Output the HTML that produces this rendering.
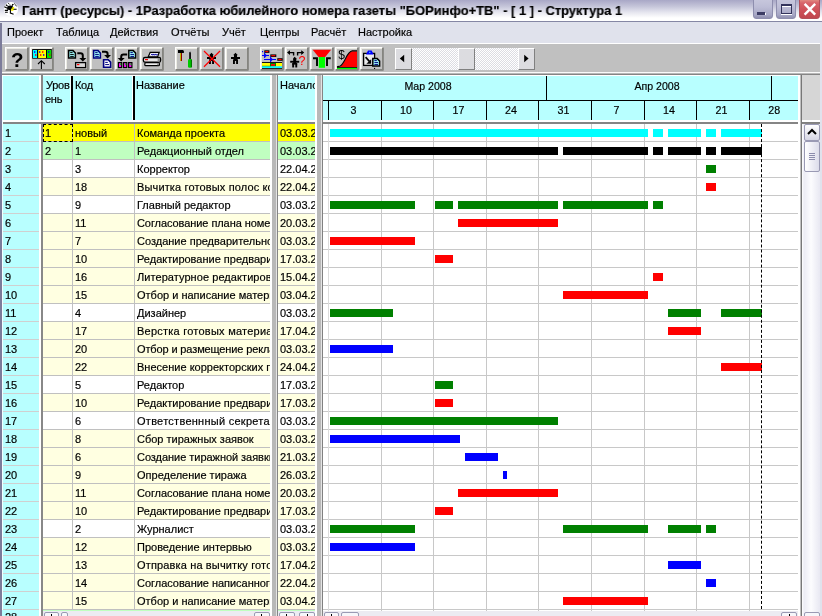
<!DOCTYPE html>
<html><head><meta charset="utf-8"><title>Gantt</title>
<style>
html,body{margin:0;padding:0;}
body{width:822px;height:616px;overflow:hidden;position:relative;background:#e0e2ec;font-family:"Liberation Sans",sans-serif;}
div,span{position:absolute;box-sizing:border-box;}
.t,.cell{will-change:transform;-webkit-text-stroke:0.18px #000;}
.t{white-space:nowrap;color:#000;font-size:11px;line-height:12px;}
.cell{overflow:hidden;white-space:nowrap;font-size:11px;line-height:17px;height:17px;padding-top:1.2px;color:#000;}
.btn{width:23px;height:23px;top:47px;background:#c0c0c0;border:1px solid;border-color:#fff #858580 #858580 #fff;box-shadow:0.6px 0.6px 0 #6c6c68, inset 1px 1px 0 #ecece4;}
.sb{background:#d4d0c8;border:1px solid;border-color:#fff #808080 #808080 #fff;}
</style></head><body>

<div style="left:0;top:0;width:822px;height:22px;background:linear-gradient(#a8a7c6 0px,#c3c3d8 6px,#e4e4ee 12px,#ffffff 18px,#ffffff 22px);"></div>
<div style="left:0;top:20.8px;width:822px;height:1.7px;background:linear-gradient(#b4b4cc,#7c7e9c 60%,#8c8eaa);"></div>
<div class="t" id="title" style="left:22px;top:1.5px;font-size:13.5px;font-weight:bold;line-height:18px;transform:scaleX(0.9575);transform-origin:0 0;">Гантт (ресурсы) - 1Разработка юбилейного номера газеты "БОРинфо+ТВ" - [ 1 ] - Структура 1</div>
<svg style="position:absolute;left:0;top:0" width="24" height="20" viewBox="0 0 24 20"><ellipse cx="11" cy="9" rx="7.2" ry="6.9" fill="#fff"/><ellipse cx="10.2" cy="7.8" rx="3" ry="2.3" fill="#000"/><path d="M7.5 6l-1.6-1.2M12 5.6l1.2-1.4" stroke="#000" stroke-width="1.2"/><path d="M8.3 3.4l2 1.4M12.5 5.2l1-1.8M14.5 3.5l2.2 3" stroke="#000" stroke-width="1" stroke-dasharray="1.4 0.7" fill="none"/><path d="M4.3 6.8l3.6 1.6M4.8 10.4h3.2M5 12.3h2.8M12.8 9.2h3.8M10.4 9.5v3.6l3.2 1.1M8 9.5l-1.5 1.2" stroke="#000" stroke-width="1.1" fill="none"/><rect x="11" y="8.6" width="2.4" height="2.2" fill="#f4f000"/><rect x="12.3" y="7" width="1.8" height="2" fill="#f4f000"/></svg>
<div style="left:753px;top:-3px;width:20px;height:22px;border-radius:3px;background:linear-gradient(#c9c9de 0%,#bdbdd6 45%,#a6a6c4 85%,#9090b0 100%);border:1px solid #8e8eae;"></div>
<div style="left:758px;top:12.6px;width:7.5px;height:2.8px;background:#fff;"></div><div style="left:757.4px;top:12.2px;width:7.5px;height:2.6px;background:#3c3c64;"></div>
<div style="left:776px;top:-3px;width:20px;height:22px;border-radius:3px;background:linear-gradient(#c9c9de 0%,#bdbdd6 45%,#a6a6c4 85%,#9090b0 100%);border:1px solid #8e8eae;"></div>
<div style="left:781.4px;top:4.6px;width:11px;height:10.4px;border:1px solid #fff;border-top-width:2.4px;"></div><div style="left:780.6px;top:4px;width:11px;height:10.4px;border:1px solid #34345c;border-top-width:2.4px;"></div>
<div style="left:799px;top:-3px;width:20.5px;height:22px;border-radius:3px;background:linear-gradient(#e6a08e 0%,#d8646a 25%,#cf5058 60%,#c0464e 100%);border:1px solid #b4505a;"></div>
<svg style="position:absolute;left:802px;top:1px" width="16" height="16" viewBox="0 0 16 16"><path d="M2.6 2.8l10.6 10.8M13.2 2.8l-10.6 10.8" stroke="#fff" stroke-width="2.4"/></svg>
<div class="t" style="left:6.6px;top:26px;font-size:11px;line-height:13px;">Проект</div>
<div class="t" style="left:55.6px;top:26px;font-size:11px;line-height:13px;">Таблица</div>
<div class="t" style="left:109.6px;top:26px;font-size:11px;line-height:13px;">Действия</div>
<div class="t" style="left:170.6px;top:26px;font-size:11px;line-height:13px;">Отчёты</div>
<div class="t" style="left:222.1px;top:26px;font-size:11px;line-height:13px;">Учёт</div>
<div class="t" style="left:259.6px;top:26px;font-size:11px;line-height:13px;">Центры</div>
<div class="t" style="left:311.1px;top:26px;font-size:11px;line-height:13px;">Расчёт</div>
<div class="t" style="left:357.6px;top:26px;font-size:11px;line-height:13px;">Настройка</div>
<div style="left:0;top:42.5px;width:820px;height:1px;background:#fff;"></div>
<div style="left:0;top:43.5px;width:820px;height:28.5px;background:#c0c0c0;"></div>
<div style="left:0;top:72px;width:820px;height:1.3px;background:#fafafa;"></div>
<div style="left:0;top:73.2px;width:820px;height:1.2px;background:#b8b8b8;"></div><div style="left:0;top:74.3px;width:820px;height:1.2px;background:#858585;"></div>
<div class="btn" id="b0" style="left:5px;"></div>
<div class="btn" id="b1" style="left:30px;"></div>
<div class="btn" id="b2" style="left:65px;"></div>
<div class="btn" id="b3" style="left:90px;"></div>
<div class="btn" id="b4" style="left:115px;"></div>
<div class="btn" id="b5" style="left:140px;"></div>
<div class="btn" id="b6" style="left:175px;"></div>
<div class="btn" id="b7" style="left:200px;"></div>
<div class="btn" id="b8" style="left:225px;"></div>
<div class="btn" id="b9" style="left:260px;"></div>
<div class="btn" id="b10" style="left:285px;"></div>
<div class="btn" id="b11" style="left:310px;"></div>
<div class="btn" id="b12" style="left:335px;"></div>
<div class="btn" id="b13" style="left:360px;"></div>
<div style="left:395px;top:48px;width:139px;height:21.5px;background:repeating-conic-gradient(#ffffff 0% 25%,#dcdce2 0% 50%) 0 0/2px 2px;"></div>
<div class="sb" style="left:395px;top:48px;width:16.5px;height:21.5px;background:#dcdce0;"></div>
<div class="sb" style="left:458px;top:48px;width:17px;height:21.5px;background:#dcdce0;"></div>
<div class="sb" style="left:518px;top:48px;width:16.5px;height:21.5px;background:#dcdce0;"></div>
<svg style="position:absolute;left:395px;top:48px" width="140" height="22"><path d="M4.8 10.5l4.4-3.8v7.6z" fill="#000"/><path d="M133.6 10.5l-4.4-3.8v7.6z" fill="#000"/></svg>
<div style="left:0;top:22.5px;width:1.6px;height:594px;background:#7c7c9a;z-index:5"></div>
<div style="left:2px;top:75px;width:818px;height:541px;background:#ffffff;"></div>
<div style="left:2px;top:75.5px;width:37px;height:44.5px;background:#b8ffff;"></div>
<div style="left:42.5px;top:75.5px;width:29px;height:44.5px;background:#b8ffff;"></div>
<div style="left:73px;top:75.5px;width:58.5px;height:44.5px;background:#b8ffff;"></div>
<div style="left:135px;top:75.5px;width:135px;height:44.5px;background:#b8ffff;"></div>
<div style="left:277.5px;top:75.5px;width:37.5px;height:44.5px;background:#b8ffff;"></div>
<div style="left:322.5px;top:75.5px;width:475.5px;height:44.5px;background:#b8ffff;"></div>
<div style="left:39px;top:75px;width:2px;height:541px;background:#ffffff;"></div>
<div style="left:41px;top:75px;width:1.6px;height:541px;background:#888888;"></div>
<div style="left:69.8px;top:76px;width:1.6px;height:44px;background:#f0ffff;"></div>
<div style="left:71.3px;top:76px;width:1.7px;height:44px;background:#000;"></div>
<div style="left:133.2px;top:76px;width:1.7px;height:44px;background:#000;"></div>
<div style="left:131.5px;top:76px;width:1.5px;height:44px;background:#fff;"></div>
<div style="left:2px;top:120px;width:818px;height:2px;background:#ffffff;"></div>
<div style="left:2px;top:122px;width:818px;height:1.5px;background:#858585;"></div>
<div class="t" style="left:45.8px;top:77.6px;font-size:11px;line-height:14.1px;white-space:normal;width:27px;letter-spacing:-0.25px">Уров<br><span style="position:relative;left:-1px">ень</span></div>
<div class="t" style="left:75px;top:77.6px;font-size:11px;line-height:14.1px;letter-spacing:-0.3px">Код</div>
<div class="t" style="left:136px;top:77.6px;font-size:11px;line-height:14.1px;letter-spacing:-0.05px">Название</div>
<div class="t" style="left:279.5px;top:77.6px;font-size:11px;line-height:14.1px;width:35.5px;overflow:hidden">Начало</div>
<div style="left:2px;top:124px;width:37px;height:17px;background:#b8ffff;"></div>
<div class="cell" style="left:5px;top:124px;width:34px;">1</div>
<div style="left:42.5px;top:124px;width:227.5px;height:17px;background:#ffff00;"></div>
<div style="left:277.5px;top:124px;width:37.5px;height:17px;background:#ffff00;"></div>
<div style="left:2px;top:141px;width:37px;height:1px;background:#d0d0d0;"></div>
<div style="left:42.5px;top:141px;width:227.5px;height:1px;background:#c0c0c0;"></div>
<div style="left:277.5px;top:141px;width:37.5px;height:1px;background:#c0c0c0;"></div>
<div class="cell" style="left:45px;top:124px;width:26px;">1</div>
<div class="cell" style="left:74.5px;top:124px;width:58px;">новый</div>
<div class="cell" style="left:136.6px;top:124px;width:133.3px;">Команда проекта</div>
<div class="cell" style="left:279.5px;top:124px;width:35.5px;">03.03.2008</div>
<div style="left:2px;top:142px;width:37px;height:17px;background:#b8ffff;"></div>
<div class="cell" style="left:5px;top:142px;width:34px;">2</div>
<div style="left:42.5px;top:142px;width:227.5px;height:17px;background:#c0ffc0;"></div>
<div style="left:277.5px;top:142px;width:37.5px;height:17px;background:#c0ffc0;"></div>
<div style="left:2px;top:159px;width:37px;height:1px;background:#d0d0d0;"></div>
<div style="left:42.5px;top:159px;width:227.5px;height:1px;background:#c0c0c0;"></div>
<div style="left:277.5px;top:159px;width:37.5px;height:1px;background:#c0c0c0;"></div>
<div class="cell" style="left:45px;top:142px;width:26px;">2</div>
<div class="cell" style="left:74.5px;top:142px;width:58px;">1</div>
<div class="cell" style="left:136.6px;top:142px;width:133.3px;">Редакционный отдел</div>
<div class="cell" style="left:279.5px;top:142px;width:35.5px;">03.03.2008</div>
<div style="left:2px;top:160px;width:37px;height:17px;background:#b8ffff;"></div>
<div class="cell" style="left:5px;top:160px;width:34px;">3</div>
<div style="left:42.5px;top:160px;width:227.5px;height:17px;background:#ffffff;"></div>
<div style="left:277.5px;top:160px;width:37.5px;height:17px;background:#ffffff;"></div>
<div style="left:2px;top:177px;width:37px;height:1px;background:#d0d0d0;"></div>
<div style="left:42.5px;top:177px;width:227.5px;height:1px;background:#c0c0c0;"></div>
<div style="left:277.5px;top:177px;width:37.5px;height:1px;background:#c0c0c0;"></div>
<div class="cell" style="left:74.5px;top:160px;width:58px;">3</div>
<div class="cell" style="left:136.6px;top:160px;width:133.3px;">Корректор</div>
<div class="cell" style="left:279.5px;top:160px;width:35.5px;">22.04.2008</div>
<div style="left:2px;top:178px;width:37px;height:17px;background:#b8ffff;"></div>
<div class="cell" style="left:5px;top:178px;width:34px;">4</div>
<div style="left:42.5px;top:178px;width:227.5px;height:17px;background:#ffffe1;"></div>
<div style="left:277.5px;top:178px;width:37.5px;height:17px;background:#ffffe1;"></div>
<div style="left:2px;top:195px;width:37px;height:1px;background:#d0d0d0;"></div>
<div style="left:42.5px;top:195px;width:227.5px;height:1px;background:#c0c0c0;"></div>
<div style="left:277.5px;top:195px;width:37.5px;height:1px;background:#c0c0c0;"></div>
<div class="cell" style="left:74.5px;top:178px;width:58px;">18</div>
<div class="cell" style="left:136.6px;top:178px;width:133.3px;letter-spacing:0.142px;">Вычитка готовых полос корректором</div>
<div class="cell" style="left:279.5px;top:178px;width:35.5px;">22.04.2008</div>
<div style="left:2px;top:196px;width:37px;height:17px;background:#b8ffff;"></div>
<div class="cell" style="left:5px;top:196px;width:34px;">5</div>
<div style="left:42.5px;top:196px;width:227.5px;height:17px;background:#ffffff;"></div>
<div style="left:277.5px;top:196px;width:37.5px;height:17px;background:#ffffff;"></div>
<div style="left:2px;top:213px;width:37px;height:1px;background:#d0d0d0;"></div>
<div style="left:42.5px;top:213px;width:227.5px;height:1px;background:#c0c0c0;"></div>
<div style="left:277.5px;top:213px;width:37.5px;height:1px;background:#c0c0c0;"></div>
<div class="cell" style="left:74.5px;top:196px;width:58px;">9</div>
<div class="cell" style="left:136.6px;top:196px;width:133.3px;">Главный редактор</div>
<div class="cell" style="left:279.5px;top:196px;width:35.5px;">03.03.2008</div>
<div style="left:2px;top:214px;width:37px;height:17px;background:#b8ffff;"></div>
<div class="cell" style="left:5px;top:214px;width:34px;">6</div>
<div style="left:42.5px;top:214px;width:227.5px;height:17px;background:#ffffe1;"></div>
<div style="left:277.5px;top:214px;width:37.5px;height:17px;background:#ffffe1;"></div>
<div style="left:2px;top:231px;width:37px;height:1px;background:#d0d0d0;"></div>
<div style="left:42.5px;top:231px;width:227.5px;height:1px;background:#c0c0c0;"></div>
<div style="left:277.5px;top:231px;width:37.5px;height:1px;background:#c0c0c0;"></div>
<div class="cell" style="left:74.5px;top:214px;width:58px;">11</div>
<div class="cell" style="left:136.6px;top:214px;width:133.3px;letter-spacing:-0.073px;">Согласование плана номера</div>
<div class="cell" style="left:279.5px;top:214px;width:35.5px;">20.03.2008</div>
<div style="left:2px;top:232px;width:37px;height:17px;background:#b8ffff;"></div>
<div class="cell" style="left:5px;top:232px;width:34px;">7</div>
<div style="left:42.5px;top:232px;width:227.5px;height:17px;background:#ffffe1;"></div>
<div style="left:277.5px;top:232px;width:37.5px;height:17px;background:#ffffe1;"></div>
<div style="left:2px;top:249px;width:37px;height:1px;background:#d0d0d0;"></div>
<div style="left:42.5px;top:249px;width:227.5px;height:1px;background:#c0c0c0;"></div>
<div style="left:277.5px;top:249px;width:37.5px;height:1px;background:#c0c0c0;"></div>
<div class="cell" style="left:74.5px;top:232px;width:58px;">7</div>
<div class="cell" style="left:136.6px;top:232px;width:133.3px;">Создание предварительного плана</div>
<div class="cell" style="left:279.5px;top:232px;width:35.5px;">03.03.2008</div>
<div style="left:2px;top:250px;width:37px;height:17px;background:#b8ffff;"></div>
<div class="cell" style="left:5px;top:250px;width:34px;">8</div>
<div style="left:42.5px;top:250px;width:227.5px;height:17px;background:#ffffe1;"></div>
<div style="left:277.5px;top:250px;width:37.5px;height:17px;background:#ffffe1;"></div>
<div style="left:2px;top:267px;width:37px;height:1px;background:#d0d0d0;"></div>
<div style="left:42.5px;top:267px;width:227.5px;height:1px;background:#c0c0c0;"></div>
<div style="left:277.5px;top:267px;width:37.5px;height:1px;background:#c0c0c0;"></div>
<div class="cell" style="left:74.5px;top:250px;width:58px;">10</div>
<div class="cell" style="left:136.6px;top:250px;width:133.3px;">Редактирование предварительного</div>
<div class="cell" style="left:279.5px;top:250px;width:35.5px;">17.03.2008</div>
<div style="left:2px;top:268px;width:37px;height:17px;background:#b8ffff;"></div>
<div class="cell" style="left:5px;top:268px;width:34px;">9</div>
<div style="left:42.5px;top:268px;width:227.5px;height:17px;background:#ffffe1;"></div>
<div style="left:277.5px;top:268px;width:37.5px;height:17px;background:#ffffe1;"></div>
<div style="left:2px;top:285px;width:37px;height:1px;background:#d0d0d0;"></div>
<div style="left:42.5px;top:285px;width:227.5px;height:1px;background:#c0c0c0;"></div>
<div style="left:277.5px;top:285px;width:37.5px;height:1px;background:#c0c0c0;"></div>
<div class="cell" style="left:74.5px;top:268px;width:58px;">16</div>
<div class="cell" style="left:136.6px;top:268px;width:133.3px;letter-spacing:0.064px;">Литературное редактирование</div>
<div class="cell" style="left:279.5px;top:268px;width:35.5px;">15.04.2008</div>
<div style="left:2px;top:286px;width:37px;height:17px;background:#b8ffff;"></div>
<div class="cell" style="left:5px;top:286px;width:34px;">10</div>
<div style="left:42.5px;top:286px;width:227.5px;height:17px;background:#ffffe1;"></div>
<div style="left:277.5px;top:286px;width:37.5px;height:17px;background:#ffffe1;"></div>
<div style="left:2px;top:303px;width:37px;height:1px;background:#d0d0d0;"></div>
<div style="left:42.5px;top:303px;width:227.5px;height:1px;background:#c0c0c0;"></div>
<div style="left:277.5px;top:303px;width:37.5px;height:1px;background:#c0c0c0;"></div>
<div class="cell" style="left:74.5px;top:286px;width:58px;">15</div>
<div class="cell" style="left:136.6px;top:286px;width:133.3px;">Отбор и написание материалов</div>
<div class="cell" style="left:279.5px;top:286px;width:35.5px;">03.04.2008</div>
<div style="left:2px;top:304px;width:37px;height:17px;background:#b8ffff;"></div>
<div class="cell" style="left:5px;top:304px;width:34px;">11</div>
<div style="left:42.5px;top:304px;width:227.5px;height:17px;background:#ffffff;"></div>
<div style="left:277.5px;top:304px;width:37.5px;height:17px;background:#ffffff;"></div>
<div style="left:2px;top:321px;width:37px;height:1px;background:#d0d0d0;"></div>
<div style="left:42.5px;top:321px;width:227.5px;height:1px;background:#c0c0c0;"></div>
<div style="left:277.5px;top:321px;width:37.5px;height:1px;background:#c0c0c0;"></div>
<div class="cell" style="left:74.5px;top:304px;width:58px;">4</div>
<div class="cell" style="left:136.6px;top:304px;width:133.3px;">Дизайнер</div>
<div class="cell" style="left:279.5px;top:304px;width:35.5px;">03.03.2008</div>
<div style="left:2px;top:322px;width:37px;height:17px;background:#b8ffff;"></div>
<div class="cell" style="left:5px;top:322px;width:34px;">12</div>
<div style="left:42.5px;top:322px;width:227.5px;height:17px;background:#ffffe1;"></div>
<div style="left:277.5px;top:322px;width:37.5px;height:17px;background:#ffffe1;"></div>
<div style="left:2px;top:339px;width:37px;height:1px;background:#d0d0d0;"></div>
<div style="left:42.5px;top:339px;width:227.5px;height:1px;background:#c0c0c0;"></div>
<div style="left:277.5px;top:339px;width:37.5px;height:1px;background:#c0c0c0;"></div>
<div class="cell" style="left:74.5px;top:322px;width:58px;">17</div>
<div class="cell" style="left:136.6px;top:322px;width:133.3px;letter-spacing:0.238px;">Верстка готовых материалов</div>
<div class="cell" style="left:279.5px;top:322px;width:35.5px;">17.04.2008</div>
<div style="left:2px;top:340px;width:37px;height:17px;background:#b8ffff;"></div>
<div class="cell" style="left:5px;top:340px;width:34px;">13</div>
<div style="left:42.5px;top:340px;width:227.5px;height:17px;background:#ffffe1;"></div>
<div style="left:277.5px;top:340px;width:37.5px;height:17px;background:#ffffe1;"></div>
<div style="left:2px;top:357px;width:37px;height:1px;background:#d0d0d0;"></div>
<div style="left:42.5px;top:357px;width:227.5px;height:1px;background:#c0c0c0;"></div>
<div style="left:277.5px;top:357px;width:37.5px;height:1px;background:#c0c0c0;"></div>
<div class="cell" style="left:74.5px;top:340px;width:58px;">20</div>
<div class="cell" style="left:136.6px;top:340px;width:133.3px;letter-spacing:-0.128px;">Отбор и размещение рекламы</div>
<div class="cell" style="left:279.5px;top:340px;width:35.5px;">03.03.2008</div>
<div style="left:2px;top:358px;width:37px;height:17px;background:#b8ffff;"></div>
<div class="cell" style="left:5px;top:358px;width:34px;">14</div>
<div style="left:42.5px;top:358px;width:227.5px;height:17px;background:#ffffe1;"></div>
<div style="left:277.5px;top:358px;width:37.5px;height:17px;background:#ffffe1;"></div>
<div style="left:2px;top:375px;width:37px;height:1px;background:#d0d0d0;"></div>
<div style="left:42.5px;top:375px;width:227.5px;height:1px;background:#c0c0c0;"></div>
<div style="left:277.5px;top:375px;width:37.5px;height:1px;background:#c0c0c0;"></div>
<div class="cell" style="left:74.5px;top:358px;width:58px;">22</div>
<div class="cell" style="left:136.6px;top:358px;width:133.3px;letter-spacing:0.01px;">Внесение корректорских правок</div>
<div class="cell" style="left:279.5px;top:358px;width:35.5px;">24.04.2008</div>
<div style="left:2px;top:376px;width:37px;height:17px;background:#b8ffff;"></div>
<div class="cell" style="left:5px;top:376px;width:34px;">15</div>
<div style="left:42.5px;top:376px;width:227.5px;height:17px;background:#ffffff;"></div>
<div style="left:277.5px;top:376px;width:37.5px;height:17px;background:#ffffff;"></div>
<div style="left:2px;top:393px;width:37px;height:1px;background:#d0d0d0;"></div>
<div style="left:42.5px;top:393px;width:227.5px;height:1px;background:#c0c0c0;"></div>
<div style="left:277.5px;top:393px;width:37.5px;height:1px;background:#c0c0c0;"></div>
<div class="cell" style="left:74.5px;top:376px;width:58px;">5</div>
<div class="cell" style="left:136.6px;top:376px;width:133.3px;">Редактор</div>
<div class="cell" style="left:279.5px;top:376px;width:35.5px;">17.03.2008</div>
<div style="left:2px;top:394px;width:37px;height:17px;background:#b8ffff;"></div>
<div class="cell" style="left:5px;top:394px;width:34px;">16</div>
<div style="left:42.5px;top:394px;width:227.5px;height:17px;background:#ffffe1;"></div>
<div style="left:277.5px;top:394px;width:37.5px;height:17px;background:#ffffe1;"></div>
<div style="left:2px;top:411px;width:37px;height:1px;background:#d0d0d0;"></div>
<div style="left:42.5px;top:411px;width:227.5px;height:1px;background:#c0c0c0;"></div>
<div style="left:277.5px;top:411px;width:37.5px;height:1px;background:#c0c0c0;"></div>
<div class="cell" style="left:74.5px;top:394px;width:58px;">10</div>
<div class="cell" style="left:136.6px;top:394px;width:133.3px;">Редактирование предварительного</div>
<div class="cell" style="left:279.5px;top:394px;width:35.5px;">17.03.2008</div>
<div style="left:2px;top:412px;width:37px;height:17px;background:#b8ffff;"></div>
<div class="cell" style="left:5px;top:412px;width:34px;">17</div>
<div style="left:42.5px;top:412px;width:227.5px;height:17px;background:#ffffff;"></div>
<div style="left:277.5px;top:412px;width:37.5px;height:17px;background:#ffffff;"></div>
<div style="left:2px;top:429px;width:37px;height:1px;background:#d0d0d0;"></div>
<div style="left:42.5px;top:429px;width:227.5px;height:1px;background:#c0c0c0;"></div>
<div style="left:277.5px;top:429px;width:37.5px;height:1px;background:#c0c0c0;"></div>
<div class="cell" style="left:74.5px;top:412px;width:58px;">6</div>
<div class="cell" style="left:136.6px;top:412px;width:133.3px;letter-spacing:0.267px;">Ответственнный секретарь</div>
<div class="cell" style="left:279.5px;top:412px;width:35.5px;">03.03.2008</div>
<div style="left:2px;top:430px;width:37px;height:17px;background:#b8ffff;"></div>
<div class="cell" style="left:5px;top:430px;width:34px;">18</div>
<div style="left:42.5px;top:430px;width:227.5px;height:17px;background:#ffffe1;"></div>
<div style="left:277.5px;top:430px;width:37.5px;height:17px;background:#ffffe1;"></div>
<div style="left:2px;top:447px;width:37px;height:1px;background:#d0d0d0;"></div>
<div style="left:42.5px;top:447px;width:227.5px;height:1px;background:#c0c0c0;"></div>
<div style="left:277.5px;top:447px;width:37.5px;height:1px;background:#c0c0c0;"></div>
<div class="cell" style="left:74.5px;top:430px;width:58px;">8</div>
<div class="cell" style="left:136.6px;top:430px;width:133.3px;">Сбор тиражных заявок</div>
<div class="cell" style="left:279.5px;top:430px;width:35.5px;">03.03.2008</div>
<div style="left:2px;top:448px;width:37px;height:17px;background:#b8ffff;"></div>
<div class="cell" style="left:5px;top:448px;width:34px;">19</div>
<div style="left:42.5px;top:448px;width:227.5px;height:17px;background:#ffffe1;"></div>
<div style="left:277.5px;top:448px;width:37.5px;height:17px;background:#ffffe1;"></div>
<div style="left:2px;top:465px;width:37px;height:1px;background:#d0d0d0;"></div>
<div style="left:42.5px;top:465px;width:227.5px;height:1px;background:#c0c0c0;"></div>
<div style="left:277.5px;top:465px;width:37.5px;height:1px;background:#c0c0c0;"></div>
<div class="cell" style="left:74.5px;top:448px;width:58px;">6</div>
<div class="cell" style="left:136.6px;top:448px;width:133.3px;letter-spacing:-0.04px;">Создание тиражной заявки</div>
<div class="cell" style="left:279.5px;top:448px;width:35.5px;">21.03.2008</div>
<div style="left:2px;top:466px;width:37px;height:17px;background:#b8ffff;"></div>
<div class="cell" style="left:5px;top:466px;width:34px;">20</div>
<div style="left:42.5px;top:466px;width:227.5px;height:17px;background:#ffffe1;"></div>
<div style="left:277.5px;top:466px;width:37.5px;height:17px;background:#ffffe1;"></div>
<div style="left:2px;top:483px;width:37px;height:1px;background:#d0d0d0;"></div>
<div style="left:42.5px;top:483px;width:227.5px;height:1px;background:#c0c0c0;"></div>
<div style="left:277.5px;top:483px;width:37.5px;height:1px;background:#c0c0c0;"></div>
<div class="cell" style="left:74.5px;top:466px;width:58px;">9</div>
<div class="cell" style="left:136.6px;top:466px;width:133.3px;">Определение тиража</div>
<div class="cell" style="left:279.5px;top:466px;width:35.5px;">26.03.2008</div>
<div style="left:2px;top:484px;width:37px;height:17px;background:#b8ffff;"></div>
<div class="cell" style="left:5px;top:484px;width:34px;">21</div>
<div style="left:42.5px;top:484px;width:227.5px;height:17px;background:#ffffe1;"></div>
<div style="left:277.5px;top:484px;width:37.5px;height:17px;background:#ffffe1;"></div>
<div style="left:2px;top:501px;width:37px;height:1px;background:#d0d0d0;"></div>
<div style="left:42.5px;top:501px;width:227.5px;height:1px;background:#c0c0c0;"></div>
<div style="left:277.5px;top:501px;width:37.5px;height:1px;background:#c0c0c0;"></div>
<div class="cell" style="left:74.5px;top:484px;width:58px;">11</div>
<div class="cell" style="left:136.6px;top:484px;width:133.3px;letter-spacing:-0.073px;">Согласование плана номера</div>
<div class="cell" style="left:279.5px;top:484px;width:35.5px;">20.03.2008</div>
<div style="left:2px;top:502px;width:37px;height:17px;background:#b8ffff;"></div>
<div class="cell" style="left:5px;top:502px;width:34px;">22</div>
<div style="left:42.5px;top:502px;width:227.5px;height:17px;background:#ffffe1;"></div>
<div style="left:277.5px;top:502px;width:37.5px;height:17px;background:#ffffe1;"></div>
<div style="left:2px;top:519px;width:37px;height:1px;background:#d0d0d0;"></div>
<div style="left:42.5px;top:519px;width:227.5px;height:1px;background:#c0c0c0;"></div>
<div style="left:277.5px;top:519px;width:37.5px;height:1px;background:#c0c0c0;"></div>
<div class="cell" style="left:74.5px;top:502px;width:58px;">10</div>
<div class="cell" style="left:136.6px;top:502px;width:133.3px;">Редактирование предварительного</div>
<div class="cell" style="left:279.5px;top:502px;width:35.5px;">17.03.2008</div>
<div style="left:2px;top:520px;width:37px;height:17px;background:#b8ffff;"></div>
<div class="cell" style="left:5px;top:520px;width:34px;">23</div>
<div style="left:42.5px;top:520px;width:227.5px;height:17px;background:#ffffff;"></div>
<div style="left:277.5px;top:520px;width:37.5px;height:17px;background:#ffffff;"></div>
<div style="left:2px;top:537px;width:37px;height:1px;background:#d0d0d0;"></div>
<div style="left:42.5px;top:537px;width:227.5px;height:1px;background:#c0c0c0;"></div>
<div style="left:277.5px;top:537px;width:37.5px;height:1px;background:#c0c0c0;"></div>
<div class="cell" style="left:74.5px;top:520px;width:58px;">2</div>
<div class="cell" style="left:136.6px;top:520px;width:133.3px;">Журналист</div>
<div class="cell" style="left:279.5px;top:520px;width:35.5px;">03.03.2008</div>
<div style="left:2px;top:538px;width:37px;height:17px;background:#b8ffff;"></div>
<div class="cell" style="left:5px;top:538px;width:34px;">24</div>
<div style="left:42.5px;top:538px;width:227.5px;height:17px;background:#ffffe1;"></div>
<div style="left:277.5px;top:538px;width:37.5px;height:17px;background:#ffffe1;"></div>
<div style="left:2px;top:555px;width:37px;height:1px;background:#d0d0d0;"></div>
<div style="left:42.5px;top:555px;width:227.5px;height:1px;background:#c0c0c0;"></div>
<div style="left:277.5px;top:555px;width:37.5px;height:1px;background:#c0c0c0;"></div>
<div class="cell" style="left:74.5px;top:538px;width:58px;">12</div>
<div class="cell" style="left:136.6px;top:538px;width:133.3px;">Проведение интервью</div>
<div class="cell" style="left:279.5px;top:538px;width:35.5px;">03.03.2008</div>
<div style="left:2px;top:556px;width:37px;height:17px;background:#b8ffff;"></div>
<div class="cell" style="left:5px;top:556px;width:34px;">25</div>
<div style="left:42.5px;top:556px;width:227.5px;height:17px;background:#ffffe1;"></div>
<div style="left:277.5px;top:556px;width:37.5px;height:17px;background:#ffffe1;"></div>
<div style="left:2px;top:573px;width:37px;height:1px;background:#d0d0d0;"></div>
<div style="left:42.5px;top:573px;width:227.5px;height:1px;background:#c0c0c0;"></div>
<div style="left:277.5px;top:573px;width:37.5px;height:1px;background:#c0c0c0;"></div>
<div class="cell" style="left:74.5px;top:556px;width:58px;">13</div>
<div class="cell" style="left:136.6px;top:556px;width:133.3px;letter-spacing:0.146px;">Отправка на вычитку готовых</div>
<div class="cell" style="left:279.5px;top:556px;width:35.5px;">17.04.2008</div>
<div style="left:2px;top:574px;width:37px;height:17px;background:#b8ffff;"></div>
<div class="cell" style="left:5px;top:574px;width:34px;">26</div>
<div style="left:42.5px;top:574px;width:227.5px;height:17px;background:#ffffe1;"></div>
<div style="left:277.5px;top:574px;width:37.5px;height:17px;background:#ffffe1;"></div>
<div style="left:2px;top:591px;width:37px;height:1px;background:#d0d0d0;"></div>
<div style="left:42.5px;top:591px;width:227.5px;height:1px;background:#c0c0c0;"></div>
<div style="left:277.5px;top:591px;width:37.5px;height:1px;background:#c0c0c0;"></div>
<div class="cell" style="left:74.5px;top:574px;width:58px;">14</div>
<div class="cell" style="left:136.6px;top:574px;width:133.3px;letter-spacing:-0.03px;">Согласование написанного</div>
<div class="cell" style="left:279.5px;top:574px;width:35.5px;">22.04.2008</div>
<div style="left:2px;top:592px;width:37px;height:17px;background:#b8ffff;"></div>
<div class="cell" style="left:5px;top:592px;width:34px;">27</div>
<div style="left:42.5px;top:592px;width:227.5px;height:17px;background:#ffffe1;"></div>
<div style="left:277.5px;top:592px;width:37.5px;height:17px;background:#ffffe1;"></div>
<div style="left:2px;top:609px;width:37px;height:1px;background:#d0d0d0;"></div>
<div style="left:42.5px;top:609px;width:227.5px;height:1px;background:#c0c0c0;"></div>
<div style="left:277.5px;top:609px;width:37.5px;height:1px;background:#c0c0c0;"></div>
<div class="cell" style="left:74.5px;top:592px;width:58px;">15</div>
<div class="cell" style="left:136.6px;top:592px;width:133.3px;">Отбор и написание материалов</div>
<div class="cell" style="left:279.5px;top:592px;width:35.5px;">03.04.2008</div>
<div style="left:1.7px;top:75.5px;width:1.1px;height:541px;background:#f0ffff;"></div>
<div style="left:2px;top:610px;width:37px;height:10px;background:#b8ffff;"></div>
<div style="left:42.5px;top:609.5px;width:227.5px;height:1px;background:#c0ffc0;"></div>
<div style="left:277.5px;top:609.5px;width:37.5px;height:1px;background:#c0ffc0;"></div>
<div class="cell" style="left:5px;top:608px;width:34px;">28</div>
<div style="left:72px;top:124px;width:1px;height:486px;background:#c0c0c0;"></div>
<div style="left:134px;top:124px;width:1px;height:486px;background:#c0c0c0;"></div>
<div style="left:42.5px;top:123.5px;width:30px;height:18px;border:1.5px dashed #000;"></div>
<div style="left:270px;top:75px;width:2px;height:541px;background:#ffffff;"></div>
<div style="left:272px;top:75px;width:3.6px;height:541px;background:#b8b8b8;"></div>
<div style="left:275.6px;top:75px;width:1px;height:541px;background:#e4e4e4;"></div>
<div style="left:276.5px;top:75px;width:1.3px;height:541px;background:#858585;"></div>
<div style="left:315px;top:75px;width:2px;height:541px;background:#ffffff;"></div>
<div style="left:317px;top:75px;width:3.6px;height:541px;background:#b8b8b8;"></div>
<div style="left:320.6px;top:75px;width:1px;height:541px;background:#e4e4e4;"></div>
<div style="left:321.5px;top:75px;width:1.3px;height:541px;background:#858585;"></div>
<div style="left:42.5px;top:610.5px;width:227.5px;height:6px;background:#ecebf2;"></div>
<div style="left:277.5px;top:610.5px;width:37.5px;height:6px;background:#ecebf2;"></div>
<div style="left:322.5px;top:610.5px;width:476.5px;height:6px;background:#ecebf2;"></div>
<div style="left:44px;top:612px;width:15px;height:6px;background:#f6f6fa;border:1px solid #9a9ab4;border-radius:2px 2px 0 0"></div>
<div style="left:51.0px;top:614.3px;width:1px;height:2px;background:#000;"></div>
<div style="left:61px;top:612px;width:6.5px;height:6px;background:#f6f6fa;border:1px solid #9a9ab4;border-radius:2px 2px 0 0"></div>
<div style="left:254px;top:612px;width:15.5px;height:6px;background:#f6f6fa;border:1px solid #9a9ab4;border-radius:2px 2px 0 0"></div>
<div style="left:261.25px;top:614.3px;width:1px;height:2px;background:#000;"></div>
<div style="left:279px;top:612px;width:15.5px;height:6px;background:#f6f6fa;border:1px solid #9a9ab4;border-radius:2px 2px 0 0"></div>
<div style="left:286.25px;top:614.3px;width:1px;height:2px;background:#000;"></div>
<div style="left:299px;top:612px;width:16px;height:6px;background:#f6f6fa;border:1px solid #9a9ab4;border-radius:2px 2px 0 0"></div>
<div style="left:306.5px;top:614.3px;width:1px;height:2px;background:#000;"></div>
<div style="left:323.5px;top:612px;width:15.5px;height:6px;background:#f6f6fa;border:1px solid #9a9ab4;border-radius:2px 2px 0 0"></div>
<div style="left:330.75px;top:614.3px;width:1px;height:2px;background:#000;"></div>
<div style="left:341px;top:612px;width:17.6px;height:6px;background:#f6f6fa;border:1px solid #9a9ab4;border-radius:2px 2px 0 0"></div>
<div style="left:781px;top:612px;width:16px;height:6px;background:#f6f6fa;border:1px solid #9a9ab4;border-radius:2px 2px 0 0"></div>
<div style="left:788.5px;top:614.3px;width:1px;height:2px;background:#000;"></div>
<div style="left:322.5px;top:100px;width:476.5px;height:1px;background:#000;"></div>
<div style="left:328px;top:100px;width:1px;height:20px;background:#000;"></div>
<div class="t" style="left:327px;top:103.8px;width:53px;text-align:center;font-size:10.7px">3</div>
<div style="left:381px;top:100px;width:1px;height:20px;background:#000;"></div>
<div class="t" style="left:380px;top:103.8px;width:52px;text-align:center;font-size:10.7px">10</div>
<div style="left:433px;top:100px;width:1px;height:20px;background:#000;"></div>
<div class="t" style="left:432px;top:103.8px;width:53px;text-align:center;font-size:10.7px">17</div>
<div style="left:486px;top:100px;width:1px;height:20px;background:#000;"></div>
<div class="t" style="left:485px;top:103.8px;width:52px;text-align:center;font-size:10.7px">24</div>
<div style="left:538px;top:100px;width:1px;height:20px;background:#000;"></div>
<div class="t" style="left:537px;top:103.8px;width:53px;text-align:center;font-size:10.7px">31</div>
<div style="left:591px;top:100px;width:1px;height:20px;background:#000;"></div>
<div class="t" style="left:590px;top:103.8px;width:53px;text-align:center;font-size:10.7px">7</div>
<div style="left:644px;top:100px;width:1px;height:20px;background:#000;"></div>
<div class="t" style="left:643px;top:103.8px;width:52px;text-align:center;font-size:10.7px">14</div>
<div style="left:696px;top:100px;width:1px;height:20px;background:#000;"></div>
<div class="t" style="left:695px;top:103.8px;width:53px;text-align:center;font-size:10.7px">21</div>
<div style="left:749px;top:100px;width:1px;height:20px;background:#000;"></div>
<div class="t" style="left:748px;top:103.8px;width:52.60000000000002px;text-align:center;font-size:10.7px">28</div>
<div style="left:546px;top:76px;width:1px;height:24px;background:#000;"></div>
<div style="left:771px;top:76px;width:1px;height:24px;background:#000;"></div>
<div class="t" style="left:398.4px;top:79.6px;width:60px;text-align:center;font-size:10.6px">Мар 2008</div>
<div class="t" style="left:627px;top:79.6px;width:60px;text-align:center;font-size:10.6px">Апр 2008</div>
<div style="left:322px;top:122.5px;width:1px;height:488px;background:#808080;"></div>
<div style="left:323px;top:141px;width:476px;height:1px;background:#c8c8c8;"></div>
<div style="left:323px;top:159px;width:476px;height:1px;background:#c8c8c8;"></div>
<div style="left:323px;top:177px;width:476px;height:1px;background:#c8c8c8;"></div>
<div style="left:323px;top:195px;width:476px;height:1px;background:#c8c8c8;"></div>
<div style="left:323px;top:213px;width:476px;height:1px;background:#c8c8c8;"></div>
<div style="left:323px;top:231px;width:476px;height:1px;background:#c8c8c8;"></div>
<div style="left:323px;top:249px;width:476px;height:1px;background:#c8c8c8;"></div>
<div style="left:323px;top:267px;width:476px;height:1px;background:#c8c8c8;"></div>
<div style="left:323px;top:285px;width:476px;height:1px;background:#c8c8c8;"></div>
<div style="left:323px;top:303px;width:476px;height:1px;background:#c8c8c8;"></div>
<div style="left:323px;top:321px;width:476px;height:1px;background:#c8c8c8;"></div>
<div style="left:323px;top:339px;width:476px;height:1px;background:#c8c8c8;"></div>
<div style="left:323px;top:357px;width:476px;height:1px;background:#c8c8c8;"></div>
<div style="left:323px;top:375px;width:476px;height:1px;background:#c8c8c8;"></div>
<div style="left:323px;top:393px;width:476px;height:1px;background:#c8c8c8;"></div>
<div style="left:323px;top:411px;width:476px;height:1px;background:#c8c8c8;"></div>
<div style="left:323px;top:429px;width:476px;height:1px;background:#c8c8c8;"></div>
<div style="left:323px;top:447px;width:476px;height:1px;background:#c8c8c8;"></div>
<div style="left:323px;top:465px;width:476px;height:1px;background:#c8c8c8;"></div>
<div style="left:323px;top:483px;width:476px;height:1px;background:#c8c8c8;"></div>
<div style="left:323px;top:501px;width:476px;height:1px;background:#c8c8c8;"></div>
<div style="left:323px;top:519px;width:476px;height:1px;background:#c8c8c8;"></div>
<div style="left:323px;top:537px;width:476px;height:1px;background:#c8c8c8;"></div>
<div style="left:323px;top:555px;width:476px;height:1px;background:#c8c8c8;"></div>
<div style="left:323px;top:573px;width:476px;height:1px;background:#c8c8c8;"></div>
<div style="left:323px;top:591px;width:476px;height:1px;background:#c8c8c8;"></div>
<div style="left:323px;top:609px;width:476px;height:1px;background:#c8c8c8;"></div>
<div style="left:328px;top:123.5px;width:1px;height:487px;background:#dcdcdc;"></div>
<div style="left:381px;top:123.5px;width:1px;height:487px;background:#c8c8c8;"></div>
<div style="left:433px;top:123.5px;width:1px;height:487px;background:#c8c8c8;"></div>
<div style="left:486px;top:123.5px;width:1px;height:487px;background:#c8c8c8;"></div>
<div style="left:538px;top:123.5px;width:1px;height:487px;background:#c8c8c8;"></div>
<div style="left:591px;top:123.5px;width:1px;height:487px;background:#c8c8c8;"></div>
<div style="left:644px;top:123.5px;width:1px;height:487px;background:#c8c8c8;"></div>
<div style="left:696px;top:123.5px;width:1px;height:487px;background:#c8c8c8;"></div>
<div style="left:749px;top:123.5px;width:1px;height:487px;background:#c8c8c8;"></div>
<div style="left:330px;top:129px;width:318px;height:8px;background:#00ffff;"></div>
<div style="left:653px;top:129px;width:10px;height:8px;background:#00ffff;"></div>
<div style="left:668px;top:129px;width:33px;height:8px;background:#00ffff;"></div>
<div style="left:706px;top:129px;width:10px;height:8px;background:#00ffff;"></div>
<div style="left:721px;top:129px;width:41px;height:8px;background:#00ffff;"></div>
<div style="left:330px;top:147px;width:228px;height:8px;background:#000000;"></div>
<div style="left:563px;top:147px;width:85px;height:8px;background:#000000;"></div>
<div style="left:653px;top:147px;width:10px;height:8px;background:#000000;"></div>
<div style="left:668px;top:147px;width:33px;height:8px;background:#000000;"></div>
<div style="left:706px;top:147px;width:10px;height:8px;background:#000000;"></div>
<div style="left:721px;top:147px;width:41px;height:8px;background:#000000;"></div>
<div style="left:706px;top:165px;width:10px;height:8px;background:#008000;"></div>
<div style="left:706px;top:183px;width:10px;height:8px;background:#ff0000;"></div>
<div style="left:330px;top:201px;width:85px;height:8px;background:#008000;"></div>
<div style="left:435px;top:201px;width:18px;height:8px;background:#008000;"></div>
<div style="left:458px;top:201px;width:100px;height:8px;background:#008000;"></div>
<div style="left:563px;top:201px;width:85px;height:8px;background:#008000;"></div>
<div style="left:653px;top:201px;width:10px;height:8px;background:#008000;"></div>
<div style="left:458px;top:219px;width:100px;height:8px;background:#ff0000;"></div>
<div style="left:330px;top:237px;width:85px;height:8px;background:#ff0000;"></div>
<div style="left:435px;top:255px;width:18px;height:8px;background:#ff0000;"></div>
<div style="left:653px;top:273px;width:10px;height:8px;background:#ff0000;"></div>
<div style="left:563px;top:291px;width:85px;height:8px;background:#ff0000;"></div>
<div style="left:330px;top:309px;width:63px;height:8px;background:#008000;"></div>
<div style="left:668px;top:309px;width:33px;height:8px;background:#008000;"></div>
<div style="left:721px;top:309px;width:41px;height:8px;background:#008000;"></div>
<div style="left:668px;top:327px;width:33px;height:8px;background:#ff0000;"></div>
<div style="left:330px;top:345px;width:63px;height:8px;background:#0000ff;"></div>
<div style="left:721px;top:363px;width:41px;height:8px;background:#ff0000;"></div>
<div style="left:435px;top:381px;width:18px;height:8px;background:#008000;"></div>
<div style="left:435px;top:399px;width:18px;height:8px;background:#ff0000;"></div>
<div style="left:330px;top:417px;width:228px;height:8px;background:#008000;"></div>
<div style="left:330px;top:435px;width:130px;height:8px;background:#0000ff;"></div>
<div style="left:465px;top:453px;width:33px;height:8px;background:#0000ff;"></div>
<div style="left:503px;top:471px;width:4px;height:8px;background:#0000ff;"></div>
<div style="left:458px;top:489px;width:100px;height:8px;background:#ff0000;"></div>
<div style="left:435px;top:507px;width:18px;height:8px;background:#ff0000;"></div>
<div style="left:330px;top:525px;width:85px;height:8px;background:#008000;"></div>
<div style="left:563px;top:525px;width:85px;height:8px;background:#008000;"></div>
<div style="left:668px;top:525px;width:33px;height:8px;background:#008000;"></div>
<div style="left:706px;top:525px;width:10px;height:8px;background:#008000;"></div>
<div style="left:330px;top:543px;width:85px;height:8px;background:#0000ff;"></div>
<div style="left:668px;top:561px;width:33px;height:8px;background:#0000ff;"></div>
<div style="left:706px;top:579px;width:10px;height:8px;background:#0000ff;"></div>
<div style="left:563px;top:597px;width:85px;height:8px;background:#ff0000;"></div>
<div style="left:761.3px;top:124px;width:0;height:485px;border-left:1.3px dashed #000;"></div>
<div style="left:798px;top:75px;width:1.5px;height:541px;background:#ffffff;"></div>
<div style="left:799.5px;top:75px;width:1.2px;height:541px;background:#c0c0c0;"></div>
<div style="left:800.7px;top:75px;width:1.4px;height:541px;background:#787878;"></div>
<div style="left:802px;top:75px;width:18px;height:44.5px;background:#d6d6d6;"></div>
<div style="left:802px;top:123.5px;width:18px;height:493px;background:linear-gradient(90deg,#ffffff 0,#ececf4 2px,#fcfcfe 50%,#e8e8f2 100%);"></div>
<div style="left:802px;top:119.5px;width:18px;height:2px;background:#ffffff;"></div>
<div style="left:802px;top:121.5px;width:18px;height:1.7px;background:#808080;"></div>
<div style="left:804px;top:124px;width:15.5px;height:16.5px;background:linear-gradient(#fff,#d6d6e4);border:1px solid #9a9ab4;border-radius:2px"></div>
<svg style="position:absolute;left:807px;top:128px" width="10" height="8"><path d="M1 6l4-4 4 4" stroke="#000" stroke-width="2" fill="none"/></svg>
<div style="left:804px;top:140.8px;width:15.5px;height:31px;background:linear-gradient(90deg,#fff,#dcdcea);border:1px solid #9a9ab4;border-radius:2px"></div>
<div style="left:808.5px;top:153px;width:6.6px;height:1px;background:#8c8cac;"></div>
<div style="left:808.5px;top:155px;width:6.6px;height:1px;background:#8c8cac;"></div>
<div style="left:808.5px;top:157px;width:6.6px;height:1px;background:#8c8cac;"></div>
<div style="left:808.5px;top:159px;width:6.6px;height:1px;background:#8c8cac;"></div>
<div style="left:804px;top:612px;width:16px;height:6px;background:#f6f6fa;border:1px solid #9a9ab4;border-radius:2px 2px 0 0"></div>
<div style="left:820px;top:43px;width:2px;height:573px;background:#e0e2ec;"></div>
<svg style="position:absolute;left:0;top:0" width="822" height="80" viewBox="0 0 822 80" font-family="Liberation Sans, sans-serif"><text x="17.2" y="66.6" font-size="20.5" font-weight="bold" text-anchor="middle" fill="#000">?</text><rect x="32.2" y="49.1" width="19.6" height="9.6" fill="#000"/><rect x="33" y="50" width="4" height="8" fill="#00ffff"/><rect x="38.2" y="50" width="7.8" height="8" fill="#ffff00"/><rect x="47" y="50" width="4.2" height="8" fill="#00e000"/><rect x="34.2" y="51" width="1.1" height="2" fill="#0000ff"/><rect x="35.2" y="54" width="1.1" height="2" fill="#ff0000"/><rect x="39.2" y="51" width="1.1" height="2" fill="#0000ff"/><rect x="42.2" y="51" width="1.1" height="2" fill="#ff0000"/><rect x="40.2" y="54" width="1.1" height="2" fill="#ff0000"/><rect x="43.2" y="54" width="1.1" height="2" fill="#0000ff"/><rect x="48.2" y="51" width="1.1" height="2" fill="#0000ff"/><rect x="49.2" y="54" width="1.1" height="2" fill="#ff0000"/><path d="M41.4 69V60.8M38 64l3.4-3.3 3.4 3.3" stroke="#000" stroke-width="1.1" fill="none"/><path d="M68.6 50.6H73L75.4 53V58.0H68.6Z" fill="#9cf4f4" stroke="#000" stroke-width="1.5"/><path d="M70.2 52.6H72.6" stroke="#000" stroke-width="1"/><path d="M70.2 54.6H73.8" stroke="#000" stroke-width="1"/><path d="M70.2 56.6H73.8" stroke="#000" stroke-width="1"/><path d="M77.3 53.2H80.5Q82.8 53.2 82.8 55.5V58.5" stroke="#000" stroke-width="2" fill="none"/><path d="M79.3 58h7l-3.5 3.6z" fill="#000"/><rect x="75.6" y="62.6" width="10" height="5" fill="#d8d8d8" stroke="#000" stroke-width="1.3"/><rect x="77" y="64" width="2.4" height="1.2" fill="#ff0000"/><path d="M93.6 50.6H98L100.4 53V58.0H93.6Z" fill="#9cf4f4" stroke="#000080" stroke-width="1.5"/><path d="M95.2 52.6H97.6" stroke="#000080" stroke-width="1"/><path d="M95.2 54.6H98.8" stroke="#000080" stroke-width="1"/><path d="M95.2 56.6H98.8" stroke="#000080" stroke-width="1"/><path d="M102 51.8H105.3Q107.6 51.8 107.6 54V55.5" stroke="#000" stroke-width="2" fill="none"/><path d="M104.2 55h6.8l-3.4 3.5z" fill="#000"/><path d="M103.6 59.800000000000004H108.2L110.60000000000001 62.2V67.2H103.6Z" fill="#ffffff" stroke="#000080" stroke-width="1.6"/><path d="M105.2 62.400000000000004H107.8" stroke="#000080" stroke-width="1"/><path d="M105.2 64.600000000000004H109.0" stroke="#000080" stroke-width="1"/><path d="M128.79999999999998 50.6H133.2L135.6 53V58.0H128.79999999999998Z" fill="#9cf4f4" stroke="#000" stroke-width="1.5"/><path d="M130.39999999999998 52.6H132.79999999999998" stroke="#000080" stroke-width="1"/><path d="M130.39999999999998 54.6H134.0" stroke="#000080" stroke-width="1"/><path d="M130.39999999999998 56.6H134.0" stroke="#000080" stroke-width="1"/><path d="M127.2 54.6H123.5Q121.2 54.6 121.2 57V58.5" stroke="#000" stroke-width="2" fill="none"/><path d="M117.7 58h7l-3.5 3.6z" fill="#000"/><rect x="118.39999999999999" y="62.6" width="3.3" height="5" fill="#ff00ff" stroke="#000" stroke-width="1.2"/><rect x="120.1" y="63.4" width="1" height="1.8" fill="#00e000"/><rect x="123.5" y="62.6" width="3.3" height="5" fill="#ff00ff" stroke="#000" stroke-width="1.2"/><rect x="125.2" y="63.4" width="1" height="1.8" fill="#00e000"/><rect x="128.60000000000002" y="62.6" width="3.3" height="5" fill="#ff00ff" stroke="#000" stroke-width="1.2"/><rect x="130.3" y="63.4" width="1" height="1.8" fill="#00e000"/><path d="M150.2 52.3H159.2L157.6 56.9H148.2Z" fill="#fff" stroke="#000" stroke-width="1.2"/><path d="M151 55.3l1-1.4.9 1.4 1-1.4.9 1.4 1-1.4.9 1.4.9-1.4" stroke="#0000a0" stroke-width="0.9" fill="none"/><rect x="143.4" y="57.5" width="17.2" height="4.6" rx="1.6" fill="#e6e6e6" stroke="#000" stroke-width="1.3"/><rect x="157.6" y="58.2" width="2.3" height="3.3" fill="#8c8c8c"/><rect x="145" y="59" width="3" height="1.2" fill="#ff0000"/><rect x="144.8" y="62.7" width="14.6" height="3" rx="1" fill="#ececec" stroke="#000" stroke-width="1.2"/><rect x="157.2" y="63.2" width="1.8" height="2" fill="#8c8c8c"/><path d="M178 50h5l.9 1v2h-5.9z" fill="#000"/><rect x="180" y="53" width="1" height="8" fill="#b8b800"/><rect x="181" y="53" width="1" height="8" fill="#900000"/><path d="M189.2 59V52.5l1-1 .7 1.5V59z" fill="#000"/><rect x="188" y="59" width="4" height="8.8" rx="1.4" fill="#00c800"/><rect x="190.8" y="59.6" width="1.2" height="7.6" fill="#007800"/><path d="M211.5 52.8l1.7 1.6v1.2h-3.4v-1.2z" fill="#000"/><rect x="207.0" y="57.0" width="9" height="2.0" fill="#000"/><rect x="210.0" y="55.0" width="3" height="5.5" fill="#000"/><rect x="209.0" y="59.3" width="5" height="1.7" fill="#000"/><rect x="209.0" y="60.0" width="1.9" height="4.0" fill="#000"/><rect x="212.1" y="60.0" width="1.9" height="4.0" fill="#000"/><path d="M204 51L220 66.8M220 51L204 66.8" stroke="#ff0000" stroke-width="1.2"/><path d="M235.5 52.8l1.7 1.6v1.2h-3.4v-1.2z" fill="#000"/><rect x="231.0" y="57.0" width="9" height="2.0" fill="#000"/><rect x="234.0" y="55.0" width="3" height="5.5" fill="#000"/><rect x="233.0" y="59.3" width="5" height="1.7" fill="#000"/><rect x="233.0" y="60.0" width="1.9" height="4.0" fill="#000"/><rect x="236.1" y="60.0" width="1.9" height="4.0" fill="#000"/><rect x="264.3" y="50.3" width="5.1" height="2.6" fill="#000"/><rect x="265.3" y="51.0" width="3.1" height="1.2" fill="#ff0000"/><rect x="270.3" y="54.4" width="6.0" height="2.6" fill="#000"/><rect x="271.3" y="55.1" width="4.0" height="1.2" fill="#ff0000"/><rect x="277.3" y="58.199999999999996" width="5.3" height="2.6" fill="#000"/><rect x="278.3" y="58.9" width="3.3000000000000003" height="1.2" fill="#ff0000"/><rect x="262" y="51" width="1.1" height="1.2" fill="#0000ff"/><path d="M262 55.5H269M264.6 52.6V58M270.6 56.8V62M264 59.5H276" stroke="#0000ff" stroke-width="1.1" fill="none"/><path d="M265 53.7l2.2 1.8-2.2 1.8zM271 57.7l2.2 1.8-2.2 1.8z" fill="#0000ff"/><rect x="262" y="62" width="20" height="0.9" fill="#000"/><rect x="262" y="63" width="20" height="3" fill="#ffff00"/><rect x="270" y="63" width="6" height="3.4" fill="#008000"/><rect x="271" y="64" width="4" height="1.8" fill="#ff0000"/><rect x="262" y="65.8" width="9" height="0.8" fill="#008000"/><rect x="262" y="66.4" width="20" height="1.8" fill="#00ffff"/><rect x="262" y="68.1" width="20" height="0.8" fill="#000"/><path d="M293.6 55.6V52.6H288.5M297.6 55.6V52.6H302.5" stroke="#000" stroke-width="1.4" fill="none"/><path d="M287 52.6l3-2.4v4.8zM304.2 52.6l-3-2.4v4.8z" fill="#000"/><path d="M294.7 56.809999999999995l1.7 1.6v1.2h-3.4v-1.2z" fill="#000"/><rect x="290.2" y="60.8" width="9" height="1.9" fill="#000"/><rect x="293.2" y="58.9" width="3" height="5.225" fill="#000"/><rect x="292.2" y="62.985" width="5" height="1.615" fill="#000"/><rect x="292.2" y="63.65" width="1.9" height="3.8" fill="#000"/><rect x="295.3" y="63.65" width="1.9" height="3.8" fill="#000"/><text x="302" y="65.2" font-size="12.5" text-anchor="middle" fill="#ff0000">?</text><path d="M312.7 49.7H331.1L325 57.2H318.8Z" fill="#ff0000"/><rect x="318.8" y="57" width="6.2" height="10.8" fill="#00ff00"/><path d="M313 58.2H317V66M330.8 58.2H327V66" stroke="#000" stroke-width="1.9" fill="none"/><path d="M337 67.2L340.3 66.4C345.5 63 346.5 52 352.3 51.2H357V67.2Z" fill="#ff0000"/><path d="M337 66.9L340.3 66C345.5 62.6 346.5 51.6 352.3 50.9H357" stroke="#000" stroke-width="1.1" fill="none"/><rect x="337" y="67" width="20" height="0.9" fill="#000"/><rect x="337" y="67.9" width="20" height="1.2" fill="#00ff00"/><text x="341.6" y="59.4" font-size="12" text-anchor="middle" fill="#000">$</text><rect x="363.6" y="53.4" width="11" height="12" fill="#ececec" stroke="#000" stroke-width="1.3"/><path d="M366 54.6L368 50.6H371.6L373.6 54.6Z" fill="#0000ff"/><rect x="369.2" y="51.8" width="1.2" height="1.2" fill="#40e0ff"/><path d="M365.6 57.2L369.5 61.5" stroke="#000" stroke-width="1.8"/><path d="M366.4 63.8H371.2V59.2Z" fill="#000"/><path d="M372.8 58.6H377.2L379.59999999999997 61V66.0H372.8Z" fill="#9cf4f4" stroke="#000" stroke-width="1.5"/><path d="M374.4 60.6H376.8" stroke="#000080" stroke-width="1"/><path d="M374.4 62.6H378.0" stroke="#000080" stroke-width="1"/><path d="M374.4 64.6H378.0" stroke="#000080" stroke-width="1"/><rect x="374" y="67.9" width="1.1" height="1.1" fill="#000"/></svg>
</body></html>
